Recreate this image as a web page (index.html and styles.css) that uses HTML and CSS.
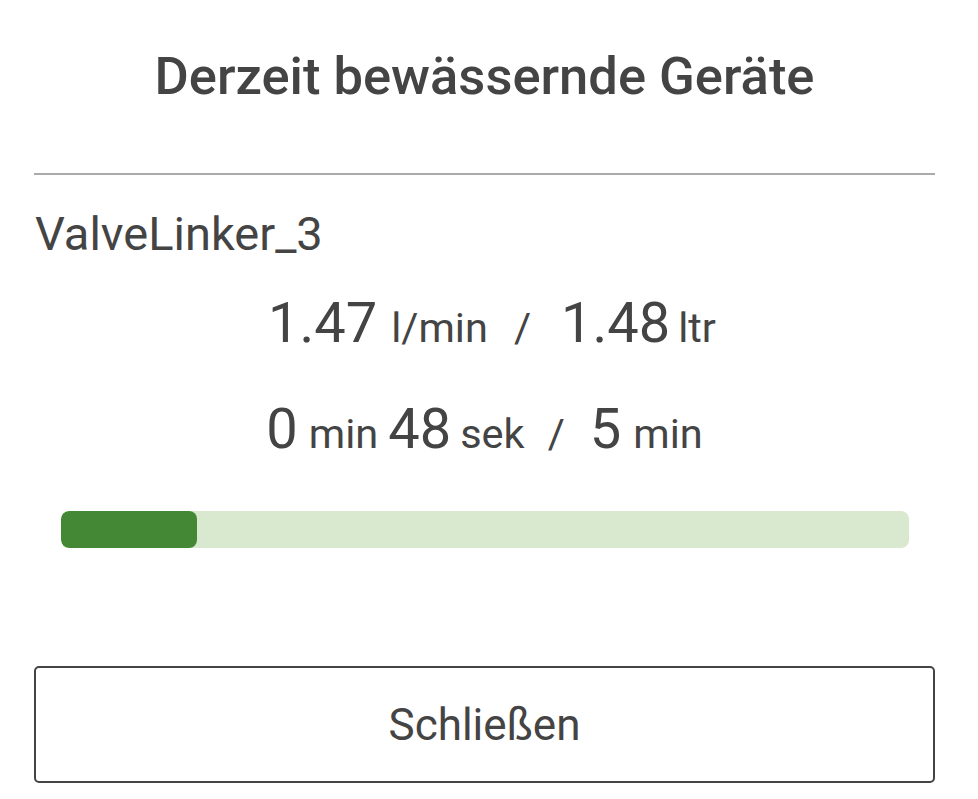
FILE: index.html
```html
<!DOCTYPE html>
<html lang="de">
<head>
<meta charset="utf-8">
<title>Derzeit bewässernde Geräte</title>
<link rel="stylesheet" href="styles.css">
</head>
<body>
<div class="dialog">
  <h1 class="title">Derzeit bewässernde Geräte</h1>
  <hr class="divider">
  <div class="device">ValveLinker_3</div>
  <div class="stat">
    <span class="big">1.47</span><span class="unit u1">l/min</span><span class="sep s1">/</span><span class="big b2">1.48</span><span class="unit u2">ltr</span>
  </div>
  <div class="stat stat2">
    <span class="big">0</span><span class="unit t1">min</span><span class="big t2">48</span><span class="unit t3">sek</span><span class="sep t4">/</span><span class="big t5">5</span><span class="unit t6">min</span>
  </div>
  <div class="progress"><div class="fill" style="width: 16%"></div></div>
  <button class="close">Schließen</button>
</div>
</body>
</html>
```
FILE: styles.css
```css
html, body {
  margin: 0;
  padding: 0;
  background: #ffffff;
}
body {
  font-family: Roboto, "Noto Sans", sans-serif;
  color: #444444;
}
.dialog {
  width: 901px;
  margin-left: 34px;
  padding-top: 46px;
}
.title {
  margin: 0;
  font-size: 52.5px;
  font-weight: 500;
  line-height: 60px;
  text-align: center;
  color: #444444;
}
.divider {
  margin: 67px 0 0 0;
  border: 0;
  height: 2px;
  background: #aaaaaa;
}
.device {
  margin-top: 31px;
  font-size: 47px;
  line-height: 56px;
  padding-left: 1px;
}
.stat {
  display: flex;
  justify-content: center;
  align-items: baseline;
  margin-top: 28px;
  padding-left: 15px;
}
.stat2 {
  margin-top: 40px;
  padding-left: 0;
}
.big {
  font-size: 56px;
  line-height: 66px;
}
.unit, .sep {
  font-size: 41.5px;
  line-height: 48px;
}
.u1 { margin-left: 14px; }
.s1 { margin-left: 26px; }
.b2 { margin-left: 30px; }
.u2 { margin-left: 8px; }
.t1 { margin-left: 11px; }
.t2 { margin-left: 10px; }
.t3 { margin-left: 9px; }
.t4 { margin-left: 23px; }
.t5 { margin-left: 25px; }
.t6 { margin-left: 12px; }
.progress {
  margin: 49px 26px 0 27px;
  height: 37px;
  border-radius: 8px;
  background: #d9e9cf;
  overflow: hidden;
}
.fill {
  height: 100%;
  background: #448836;
  border-radius: 8px;
}
.close {
  display: block;
  width: 100%;
  margin-top: 118px;
  height: 117px;
  border: 2px solid #444444;
  border-radius: 5px;
  background: #ffffff;
  font-family: Roboto, "Noto Sans", sans-serif;
  font-size: 44px;
  color: #444444;
  padding: 0;
}
```
